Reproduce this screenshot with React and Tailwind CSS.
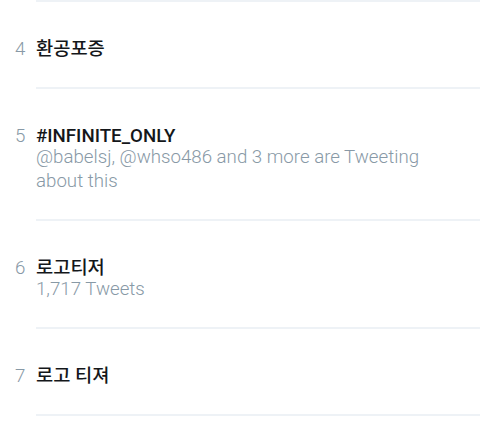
import React from "react";

const trends = [
  { rank: 4, name: "환공포증" },
  {
    rank: 5,
    name: "#INFINITE_ONLY",
    meta: "@babelsj, @whso486 and 3 more are Tweeting about this",
  },
  { rank: 6, name: "로고티저", meta: "1,717 Tweets" },
  { rank: 7, name: "로고 티져" },
];

const TrendRow = ({ rank, name, meta }) => (
  <div className="flex">
    <div className="w-[36px] shrink-0 pl-[15px] pt-[38px] text-[18.7px] leading-[18px] font-light text-[#8899a6]">
      {rank}
    </div>
    <div
      className={`flex-1 border-b-2 border-[#eef2f6] pr-[16px] pt-[38px] ${
        meta ? "pb-[26px]" : "pb-[29px]"
      }`}
    >
      <div className="text-[18.7px] leading-[18px] font-medium text-[#14171a]">{name}</div>
      {meta && (
        <div className="text-[18.7px] leading-6 font-light text-[#8899a6]">{meta}</div>
      )}
    </div>
  </div>
);

export default function App() {
  return (
    <div
      className="w-[480px] h-[423px] bg-white overflow-hidden"
      style={{ fontFamily: 'Roboto, "Noto Sans CJK KR", sans-serif' }}
    >
      <div className="ml-[36px] h-[2px] bg-[#eef2f6]" />
      {trends.map((t) => (
        <TrendRow key={t.rank} {...t} />
      ))}
    </div>
  );
}
